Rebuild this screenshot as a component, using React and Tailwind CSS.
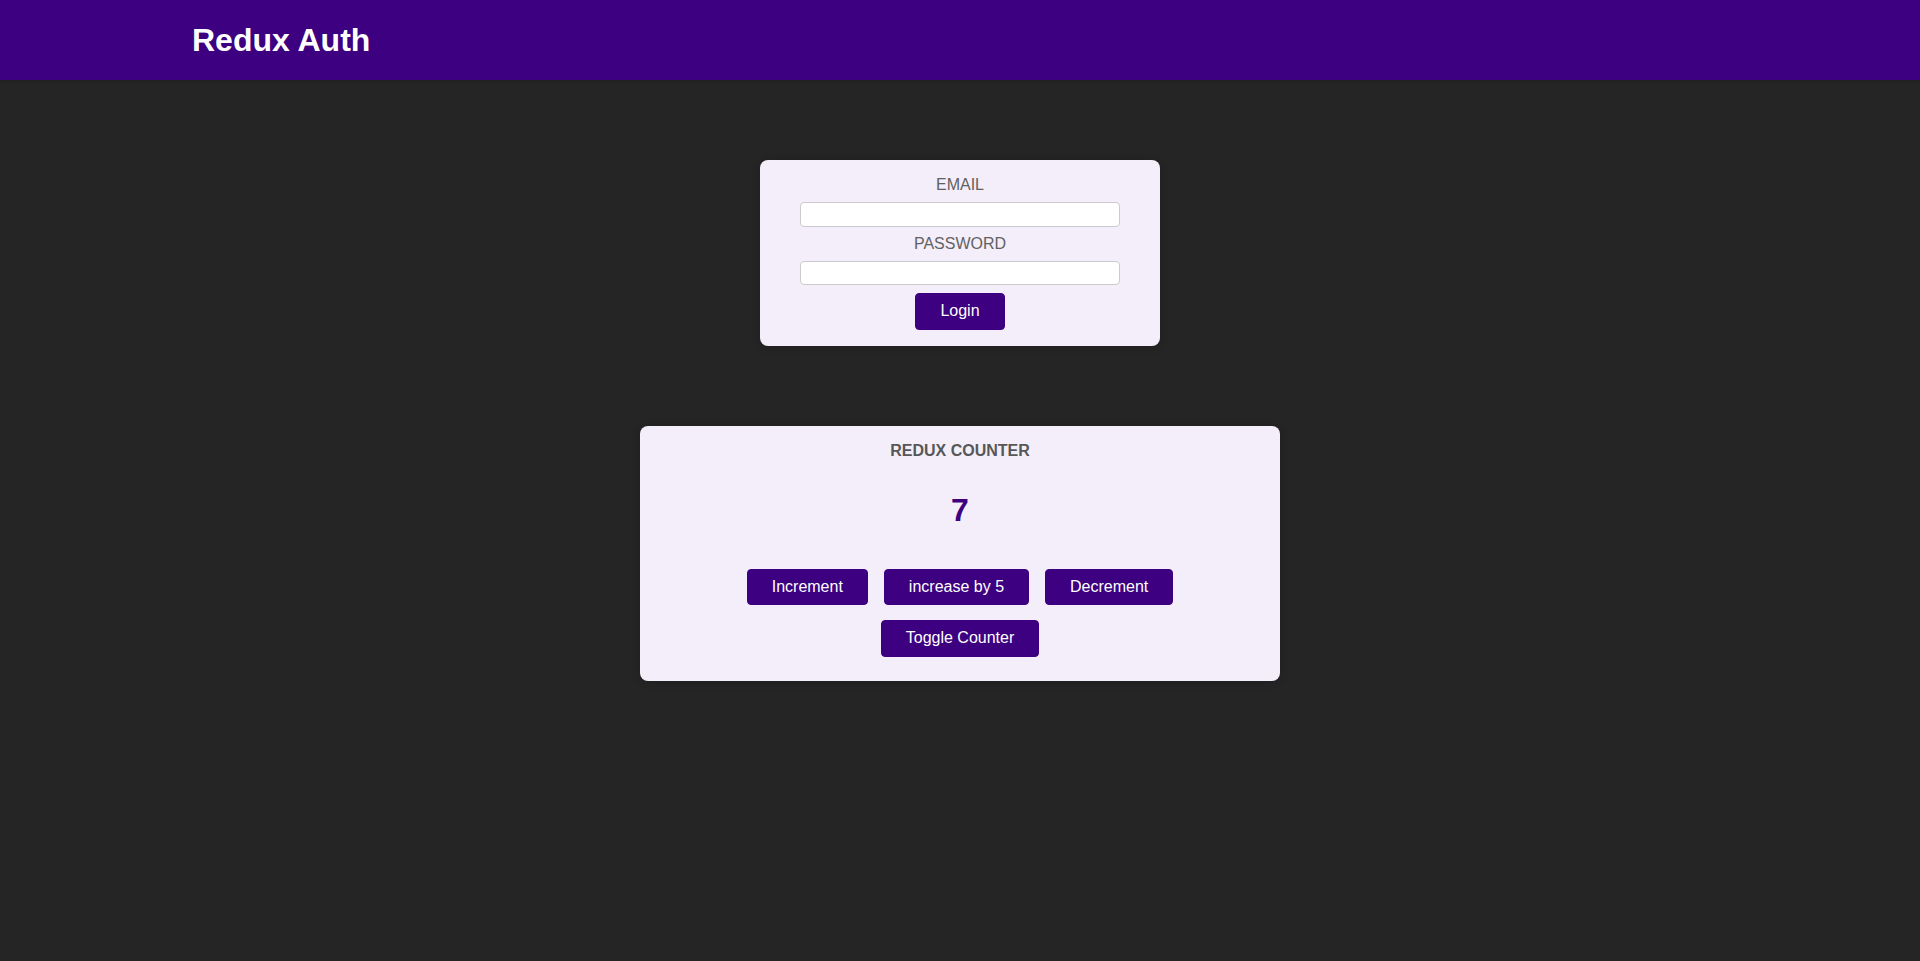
import { useState } from "react"

function Header() {
    return (
        <header className="flex h-20 w-full items-center justify-between bg-[#3c0080] px-[10%] shadow-[0_1px_4px_rgba(0,0,0,0.2)]">
            <h1 className="text-[32px] font-bold leading-[37px] text-white">Redux Auth</h1>
        </header>
    )
}

function Auth() {
    return (
        <main className="mx-auto mt-20 w-[400px] rounded-lg bg-[#f4eefa] p-4 text-center shadow-[0_1px_8px_rgba(0,0,0,0.2)]">
            <form onSubmit={(e) => e.preventDefault()}>
                <div className="mb-2">
                    <label htmlFor="email" className="mb-2 block text-base uppercase leading-[18.4px] text-[#616161]">
                        Email
                    </label>
                    <input
                        id="email"
                        type="email"
                        className="mx-auto block h-[24.3px] w-[320px] rounded border border-[#ccc] bg-white p-1 text-[13.33px]"
                    />
                </div>
                <div className="mb-2">
                    <label htmlFor="password" className="mb-2 block text-base uppercase leading-[18.4px] text-[#616161]">
                        Password
                    </label>
                    <input
                        id="password"
                        type="password"
                        className="mx-auto block h-[24.3px] w-[320px] rounded border border-[#ccc] bg-white p-1 text-[13.33px]"
                    />
                </div>
                <button className="cursor-pointer rounded border border-[#3c0080] bg-[#3c0080] px-6 py-2 text-base leading-[18.4px] text-white">
                    Login
                </button>
            </form>
        </main>
    )
}

function Counter() {
    const [counter, setCounter] = useState(7)
    const [show, setShow] = useState(true)

    const btn = "cursor-pointer rounded border border-[#3c0080] bg-[#3c0080] px-6 py-2 text-base leading-[18.4px] text-white"

    return (
        <main className="mx-auto mt-20 flex w-[640px] flex-col items-center rounded-lg bg-[#f4eefa] p-4 pb-6 text-center shadow-[0_1px_8px_rgba(0,0,0,0.2)]">
            <h1 className="text-base font-bold uppercase leading-[18.4px] text-[#575757]">Redux Counter</h1>
            {show && <div className="my-8 text-[32px] font-bold leading-[36.8px] text-[#3c0080]">{counter}</div>}
            <div className="mt-2 flex gap-4">
                <button className={btn} onClick={() => setCounter((c) => c + 1)}>Increment</button>
                <button className={btn} onClick={() => setCounter((c) => c + 5)}>increase by 5</button>
                <button className={btn} onClick={() => setCounter((c) => c - 1)}>Decrement</button>
            </div>
            <button className={`${btn} mt-[15px]`} onClick={() => setShow((s) => !s)}>Toggle Counter</button>
        </main>
    )
}

export default function App() {
    return (
        <div className="min-h-[961px] bg-[#252525] font-['Liberation_Sans',Arial,sans-serif]">
            <Header />
            <Auth />
            <Counter />
        </div>
    )
}
